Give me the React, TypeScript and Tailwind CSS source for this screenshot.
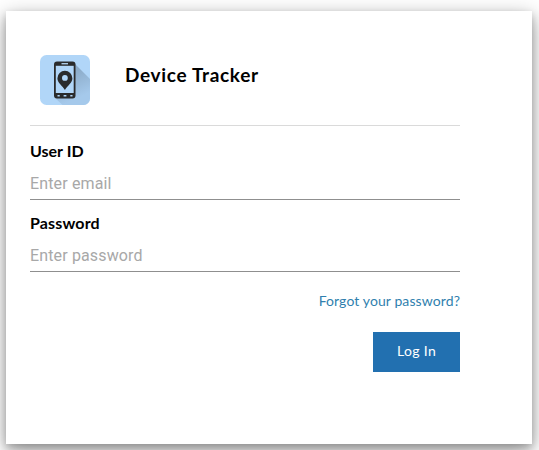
function DeviceLogo() {
  return (
    <svg viewBox="0 0 50 50" className="block size-[50px] shrink-0" aria-hidden="true">
      <defs>
        <clipPath id="tile">
          <rect width="50" height="50" rx="6.5" />
        </clipPath>
        <linearGradient id="fade" x1="33" y1="16" x2="44" y2="40" gradientUnits="userSpaceOnUse">
          <stop offset="0" stopColor="#8cabc8" />
          <stop offset="1" stopColor="#a5c9eb" />
        </linearGradient>
      </defs>
      <g clipPath="url(#tile)">
        <rect width="50" height="50" fill="#b1d6f8" />
        <path d="M35 9 L54 28 V55 H28 L15 43 Z" fill="url(#fade)" />
      </g>
      <rect x="14" y="6.5" width="21.5" height="37" rx="3" fill="#2a2b2c" />
      <rect x="15.8" y="10.8" width="17.9" height="27.2" fill="#b1d6f8" />
      <rect x="21.5" y="8" width="6.5" height="1.4" fill="#aac9e4" />
      <path
        d="M24.9 35 C22.6 30.8 17.4 27.8 17.4 23.2 A7.5 7.5 0 0 1 32.4 23.2 C32.4 27.8 27.2 30.8 24.9 35 Z"
        fill="#2a2b2c"
      />
      <circle cx="24.9" cy="22.9" r="2.9" fill="#b1d6f8" />
      <path d="M17.5 40.8h2.2M23.6 40.8h2.8M30.3 40.8h2.2" stroke="#b1d6f8" strokeWidth="1.5" />
    </svg>
  );
}

export default function App() {
  return (
    <div className="h-[450px] w-[539px] overflow-hidden bg-white pt-[11px] pl-[6px] font-['Lato',sans-serif]">
      <main className="h-[433px] w-[526px] bg-white pt-[44px] pl-6 shadow-[0_4px_8px_0_rgba(0,0,0,0.2),0_6px_20px_0_rgba(0,0,0,0.38)]">
        <form className="flex w-[430px] flex-col" onSubmit={(e) => e.preventDefault()}>
          <header className="flex h-[71px] border-b border-[#dadada] pl-[10px]">
            <DeviceLogo />
            <h1 className="ml-[35px] pt-2 text-[19px] leading-6 font-bold tracking-[0.67px] text-black">
              Device Tracker
            </h1>
          </header>
          <label htmlFor="user" className="mt-[15px] h-[21px] text-base leading-5 font-bold text-black">
            User ID
          </label>
          <input
            id="user"
            type="email"
            placeholder="Enter email"
            className="h-[38px] border-b border-[#8f8f8f] pt-[6px] font-['Roboto',sans-serif] text-base tracking-[0.14px] outline-none placeholder:text-[#a8a8a8]"
          />
          <label htmlFor="password" className="mt-[13px] h-[21px] text-base leading-5 font-bold tracking-[0.15px] text-black">
            Password
          </label>
          <input
            id="password"
            type="password"
            placeholder="Enter password"
            className="h-[38px] border-b border-[#8f8f8f] pt-[6px] font-['Roboto',sans-serif] text-base tracking-[0.14px] outline-none placeholder:text-[#a8a8a8]"
          />
          <a href="#" className="mt-[19px] h-[21px] self-end text-sm leading-5 tracking-[0.1px] text-[#307fae]">
            Forgot your password?
          </a>
          <button
            type="submit"
            className="mt-5 h-10 w-[87px] self-end bg-[#2270b0] pb-0.5 text-sm leading-5 tracking-[0.35px] text-white"
          >
            Log In
          </button>
        </form>
      </main>
    </div>
  );
}
